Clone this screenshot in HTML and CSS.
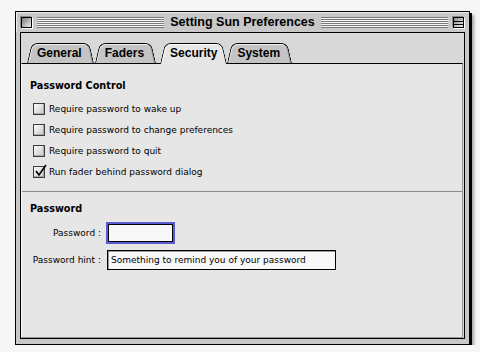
FILE: index.html
```html
<!DOCTYPE html>
<html>
  <head>
    <title>Setting Sun Preferences</title>
    <link rel="stylesheet" href="styles.css">
  </head>
  <body>
    <div class="window">
      <div class="titlebar">
        <span class="closebox"></span>
        <span class="stripes"></span>
        <span class="title">Setting Sun Preferences</span>
        <span class="stripes"></span>
        <span class="zoombox"></span>
      </div>

      <div class="frame">
        <div class="tabs">
          <span class="tab">General</span>
          <span class="tab">Faders</span>
          <span class="tab selected">Security</span>
          <span class="tab">System</span>
        </div>

        <div class="panel">
          <div class="group">
            <h2>Password Control</h2>
            <label class="check"><span class="box"></span>Require password to wake up</label>
            <label class="check"><span class="box"></span>Require password to change preferences</label>
            <label class="check"><span class="box"></span>Require password to quit</label>
            <label class="check"><span class="box checked">
              <svg width="14" height="14" viewBox="0 0 14 14">
                <path d="M2 7 L5 11 L12 1" fill="none" stroke="#000" stroke-width="1.6" />
              </svg>
            </span>Run fader behind password dialog</label>
          </div>

          <div class="group last">
            <h2>Password</h2>
            <div class="field">
              <span class="label">Password :</span>
              <span class="input short focus"></span>
            </div>
            <div class="field">
              <span class="label">Password hint :</span>
              <span class="input long">Something to remind you of your password</span>
            </div>
          </div>
        </div>
      </div>
    </div>
  </body>
</html>
```

FILE: styles.css
```css
body {
  margin: 0;
  padding: 11px 0 0 15px;
  background: #f6f6f6;
  font-family: "DejaVu Sans", sans-serif;
  font-size: 9px;
  color: #000;
}

.window {
  width: 445px;
  height: 327px;
  border: 1px solid #000;
  background: #c8c8c8;
  box-shadow: 2px 2px 0 #000, 4px 4px 3px rgba(0, 0, 0, 0.35);
  display: flex;
  flex-direction: column;
  padding: 0 4px 5px 4px;
  box-sizing: content-box;
}

.titlebar {
  height: 20px;
  margin: 0 -4px;
  padding: 0 4px;
  display: flex;
  align-items: center;
  gap: 4px;
  box-shadow: inset 1px 1px 0 #eee;
}

.closebox,
.zoombox {
  width: 9px;
  height: 9px;
  border: 1px solid #000;
  background: linear-gradient(135deg, #777, #eee);
  box-shadow: 1px 1px 0 #fff, -1px -1px 0 #888;
  flex: none;
}

.closebox {
  margin-left: 1px;
  margin-right: 1px;
}

.zoombox {
  margin-right: 1px;
  margin-left: 1px;
  background: linear-gradient(#000, #000) 0 3px / 100% 1px no-repeat,
    linear-gradient(#000, #000) 0 6px / 100% 1px no-repeat,
    linear-gradient(135deg, #888, #eee);
}

.stripes {
  flex: 1;
  height: 11px;
  background: repeating-linear-gradient(#7a7a7a 0 1px, #f4f4f4 1px 2px);
}

.title {
  font-family: "Liberation Sans", sans-serif;
  font-weight: bold;
  font-size: 12.5px;
  padding: 0 2px;
}

.frame {
  flex: 1;
  border: 1px solid #000;
  background: #d8d8d8;
  display: flex;
  flex-direction: column;
  padding: 0 1px 0 0;
}

.tabs {
  height: 30px;
  display: flex;
  align-items: flex-end;
  padding-left: 6px;
  box-sizing: border-box;
}

.tab {
  position: relative;
  z-index: 0;
  height: 20px;
  line-height: 20px;
  padding: 0 12px 0 10px;
  margin-right: 1px;
  font-family: "Liberation Sans", sans-serif;
  font-weight: bold;
  font-size: 12px;
}

.tab::before,
.tab::after {
  content: "";
  position: absolute;
  top: 0;
  bottom: 0;
  width: 60%;
  z-index: -1;
  background: #c4c4c4;
  border-top: 1px solid #000;
}

.tab::before {
  left: 0;
  border-left: 1px solid #000;
  border-top-left-radius: 6px;
  transform: skewX(-13deg);
  transform-origin: bottom left;
  box-shadow: inset 1px 1px 0 #eee;
}

.tab::after {
  right: 0;
  border-right: 1px solid #000;
  border-top-right-radius: 6px;
  transform: skewX(13deg);
  transform-origin: bottom right;
  box-shadow: inset 0 1px 0 #eee, inset -1px 0 0 #999;
}

.tab.selected {
  z-index: 1;
  height: 21px;
  margin: 0 0 -1px 3px;
  padding-right: 10px;
}

.tab.selected::before,
.tab.selected::after {
  background: #e6e6e6;
}

.tab.selected::before {
  box-shadow: inset 1px 1px 0 #fff;
}

.tab.selected::after {
  box-shadow: inset 0 1px 0 #fff;
}

.panel {
  flex: 1;
  background: #e6e6e6;
  border-top: 1px solid #000;
  border-left: 1px solid #f4f4f4;
  border-right: 1px solid #999;
  border-bottom: 1px solid #999;
}

.group {
  padding: 15px 8px 12px;
  border-bottom: 1px solid #8a8a8a;
  display: flex;
  flex-direction: column;
  gap: 7px;
}

.group.last {
  border-bottom: none;
  padding-top: 10px;
  gap: 8px;
}

h2 {
  margin: 0 0 2px;
  font-size: 9.7px;
  font-weight: bold;
  height: 14px;
  line-height: 14px;
}

.group.last h2 {
  margin-bottom: 0;
}

.check {
  display: flex;
  align-items: center;
  gap: 4px;
  height: 14px;
  padding-left: 3px;
}

.box {
  position: relative;
  width: 10px;
  height: 10px;
  border: 1px solid #3c3c3c;
  background: linear-gradient(135deg, #fafafa, #c8c8c8);
  box-shadow: inset -1px -1px 0 #aaa;
}

.box svg {
  position: absolute;
  left: 0;
  top: -3px;
}

.field {
  display: flex;
  align-items: center;
  gap: 6px;
}

.label {
  width: 71px;
  text-align: right;
}

.input {
  height: 20px;
  line-height: 18px;
  border: 1px solid #000;
  background: #f8f8f8;
  box-sizing: border-box;
  padding: 0 3px;
}

.input.short {
  width: 65px;
  height: 18px;
  margin-left: 1px;
}

.input.focus {
  outline: 2px solid #5b5bd0;
}

.input.long {
  width: 229px;
  box-shadow: inset 1px 1px 0 #999;
}
```
